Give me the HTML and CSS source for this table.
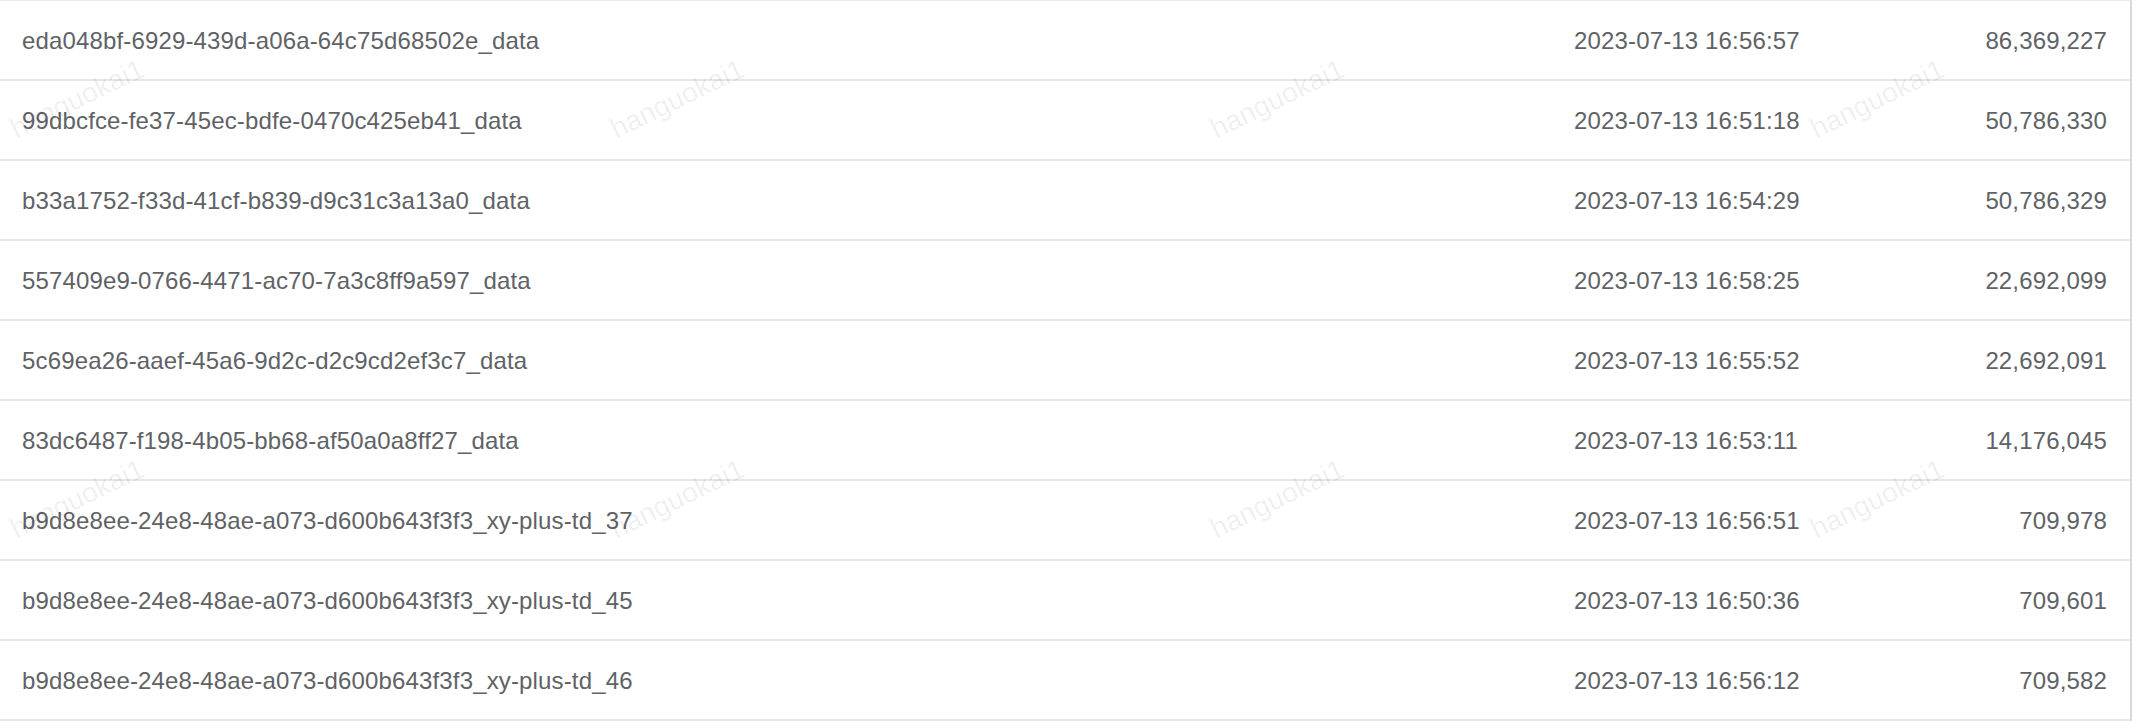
FILE: index.html
```html
<!DOCTYPE html>
<html lang="en">
<head>
    <meta charset="UTF-8">
    <meta name="viewport" content="width=device-width, initial-scale=1.0">
    <title>Data Files</title>
    <link rel="stylesheet" href="styles.css">
</head>
<body>
    <div class="page">
        <table class="file-table">
            <colgroup>
                <col class="col-name">
                <col class="col-time">
                <col class="col-size">
            </colgroup>
            <tbody>
                <tr><td>eda048bf-6929-439d-a06a-64c75d68502e_data</td><td>2023-07-13 16:56:57</td><td class="num">86,369,227</td></tr>
                <tr><td>99dbcfce-fe37-45ec-bdfe-0470c425eb41_data</td><td>2023-07-13 16:51:18</td><td class="num">50,786,330</td></tr>
                <tr><td>b33a1752-f33d-41cf-b839-d9c31c3a13a0_data</td><td>2023-07-13 16:54:29</td><td class="num">50,786,329</td></tr>
                <tr><td>557409e9-0766-4471-ac70-7a3c8ff9a597_data</td><td>2023-07-13 16:58:25</td><td class="num">22,692,099</td></tr>
                <tr><td>5c69ea26-aaef-45a6-9d2c-d2c9cd2ef3c7_data</td><td>2023-07-13 16:55:52</td><td class="num">22,692,091</td></tr>
                <tr><td>83dc6487-f198-4b05-bb68-af50a0a8ff27_data</td><td>2023-07-13 16:53:11</td><td class="num">14,176,045</td></tr>
                <tr><td>b9d8e8ee-24e8-48ae-a073-d600b643f3f3_xy-plus-td_37</td><td>2023-07-13 16:56:51</td><td class="num">709,978</td></tr>
                <tr><td>b9d8e8ee-24e8-48ae-a073-d600b643f3f3_xy-plus-td_45</td><td>2023-07-13 16:50:36</td><td class="num">709,601</td></tr>
                <tr><td>b9d8e8ee-24e8-48ae-a073-d600b643f3f3_xy-plus-td_46</td><td>2023-07-13 16:56:12</td><td class="num">709,582</td></tr>
            </tbody>
        </table>

        <div class="watermark">
            <div class="wm-cell"><span>hanguokai1</span></div>
            <div class="wm-cell"><span>hanguokai1</span></div>
            <div class="wm-cell"><span>hanguokai1</span></div>
            <div class="wm-cell"><span>hanguokai1</span></div>
            <div class="wm-cell"><span>hanguokai1</span></div>
            <div class="wm-cell"><span>hanguokai1</span></div>
            <div class="wm-cell"><span>hanguokai1</span></div>
            <div class="wm-cell"><span>hanguokai1</span></div>
        </div>
    </div>
</body>
</html>
```

FILE: styles.css
```css
body {
    margin: 0;
    background-color: #fff;
    font-family: "Liberation Sans", Arial, sans-serif;
    overflow: hidden;
}

.page {
    position: relative;
    width: 2150px;
    height: 728px;
    overflow: hidden;
}

.file-table {
    width: 2132px;
    table-layout: fixed;
    border-collapse: separate;
    border-spacing: 0;
    border-top: 1px solid #e8e8e8;
    border-right: 2px solid #d8d8d8;
    font-size: 24px;
    letter-spacing: 0.15px;
    color: #606266;
}

.col-name {
    width: 1552px;
}

.col-time {
    width: 300px;
}

.file-table td {
    height: 80px;
    padding: 2px 22px 0;
    box-sizing: border-box;
    border-bottom: 2px solid #e6e6e6;
    vertical-align: middle;
    white-space: nowrap;
}

.file-table td.num {
    text-align: right;
    padding-right: 23px;
}

.watermark {
    position: absolute;
    top: -101px;
    left: -223px;
    display: grid;
    grid-template-columns: repeat(4, 600px);
    grid-auto-rows: 400px;
    pointer-events: none;
}

.wm-cell {
    display: flex;
    align-items: center;
    justify-content: center;
}

.wm-cell span {
    display: block;
    font-size: 28px;
    color: rgba(0, 0, 0, 0.07);
    transform: rotate(-26deg);
}
```
